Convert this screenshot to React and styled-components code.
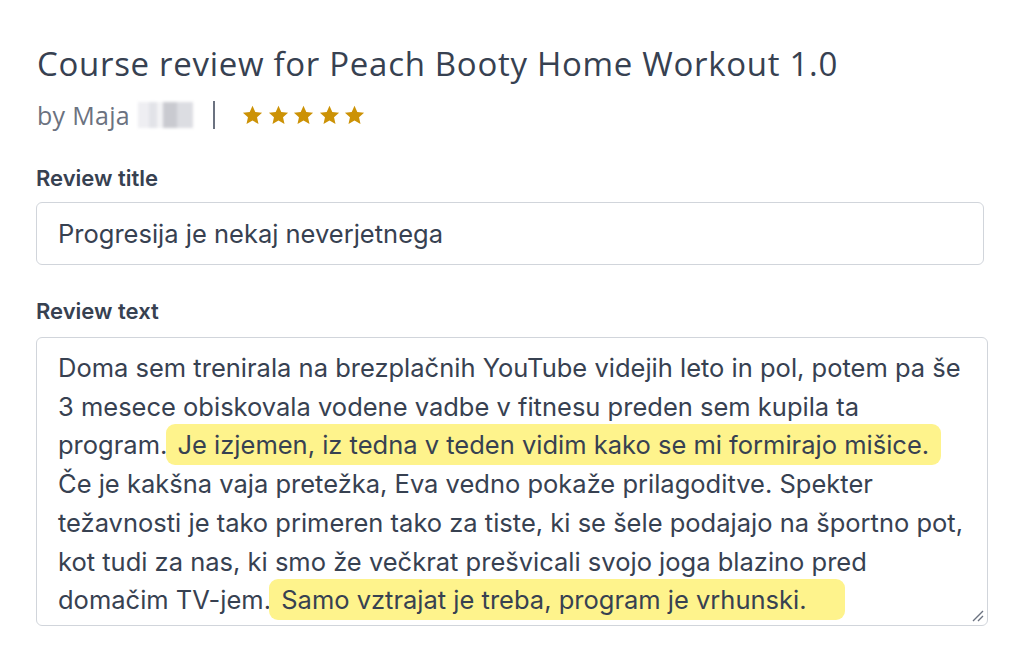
import React from 'react'
import styled, { createGlobalStyle } from 'styled-components'

const Global = createGlobalStyle`
  body {
    margin: 0;
    background: #ffffff;
    font-family: Inter, "Noto Sans", sans-serif;
  }
`

const Page = styled.div`
  padding: 40px 34px 0 36px;
  width: 952px;
`

const Title = styled.h1`
  margin: 0 0 0 1px;
  font-family: "Open Sans", sans-serif;
  font-weight: 400;
  font-size: 33px;
  letter-spacing: 0.7px;
  line-height: 48px;
  color: #374151;
`

const Meta = styled.div`
  display: flex;
  align-items: center;
  height: 40px;
  margin-top: 7px;
  margin-left: 1px;
`

const Author = styled.span`
  font-family: "Open Sans", sans-serif;
  font-size: 25px;
  letter-spacing: 0.3px;
  color: #6b7280;
`

const Blur = styled.span`
  display: inline-block;
  width: 55px;
  height: 26px;
  margin-left: 8px;
  background: linear-gradient(90deg, #eeeef2 0 20%, #e2e3e8 20% 35%, #f3f3f5 35% 45%, #c9cad0 45% 70%, #dcdde2 70% 100%);
  filter: blur(1.5px);
`

const Divider = styled.span`
  width: 2px;
  height: 28px;
  background: #6b7280;
  margin: 0 27px 0 20px;
`

const Stars = styled.div`
  display: flex;
  gap: 4.5px;
`

const Field = styled.div`
  margin-top: ${p => p.$top}px;
`

const Label = styled.div`
  font-size: 22px;
  font-weight: 600;
  color: #374151;
  line-height: 28px;
  margin-bottom: ${p => p.$gap}px;
`

const Input = styled.div`
  box-sizing: border-box;
  height: 63px;
  width: 948px;
  border: 1px solid #d1d5db;
  border-radius: 6px;
  padding: 0 21px;
  display: flex;
  align-items: center;
  font-size: 25.5px;
  color: #374151;
`

const TextArea = styled.div`
  position: relative;
  box-sizing: border-box;
  width: 952px;
  height: 289px;
  border: 1px solid #d1d5db;
  border-radius: 6px;
  padding: 11px 4px 0 21px;
  font-size: 25.5px;
  line-height: 38.7px;
  color: #374151;
  white-space: nowrap;
`

const Mark = styled.mark`
  background: #fef38c;
  color: #374151;
  border-radius: 9px;
  padding: 5px ${p => p.$tail}px 5px 12px;
  margin-left: -9px;
`

const Grip = styled.svg`
  position: absolute;
  right: 2px;
  bottom: 2px;
`

function Star() {
  return (
    <svg width="21" height="20" viewBox="0 0 24 23">
      <path d="M12 1l3.2 7.1 7.8.8-5.8 5.2 1.7 7.7L12 17.9l-6.9 3.9 1.7-7.7L1 8.9l7.8-.8z" fill="#cc9206" />
    </svg>
  )
}

export default function App() {
  return (
    <Page>
      <Global />
      <Title>Course review for Peach Booty Home Workout 1.0</Title>
      <Meta>
        <Author>by Maja</Author>
        <Blur />
        <Divider />
        <Stars>
          {[0, 1, 2, 3, 4].map(i => <Star key={i} />)}
        </Stars>
      </Meta>
      <Field $top={29}>
        <Label $gap={10}>Review title</Label>
        <Input>Progresija je nekaj neverjetnega</Input>
      </Field>
      <Field $top={32}>
        <Label $gap={12}>Review text</Label>
        <TextArea>
          Doma sem trenirala na brezplačnih YouTube videjih leto in pol, potem pa še<br />
          3 mesece obiskovala vodene vadbe v fitnesu preden sem kupila ta<br />
          program. <Mark $tail={12}>Je izjemen, iz tedna v teden vidim kako se mi formirajo mišice.</Mark><br />
          Če je kakšna vaja pretežka, Eva vedno pokaže prilagoditve. Spekter<br />
          težavnosti je tako primeren tako za tiste, ki se šele podajajo na športno pot,<br />
          kot tudi za nas, ki smo že večkrat prešvicali svojo joga blazino pred<br />
          domačim TV-jem. <Mark $tail={38}>Samo vztrajat je treba, program je vrhunski.</Mark>
          <Grip width="14" height="14" viewBox="0 0 14 14">
            <path d="M2 12L12 2M7 12l5-5" stroke="#6b7280" strokeWidth="1.4" />
          </Grip>
        </TextArea>
      </Field>
    </Page>
  )
}
